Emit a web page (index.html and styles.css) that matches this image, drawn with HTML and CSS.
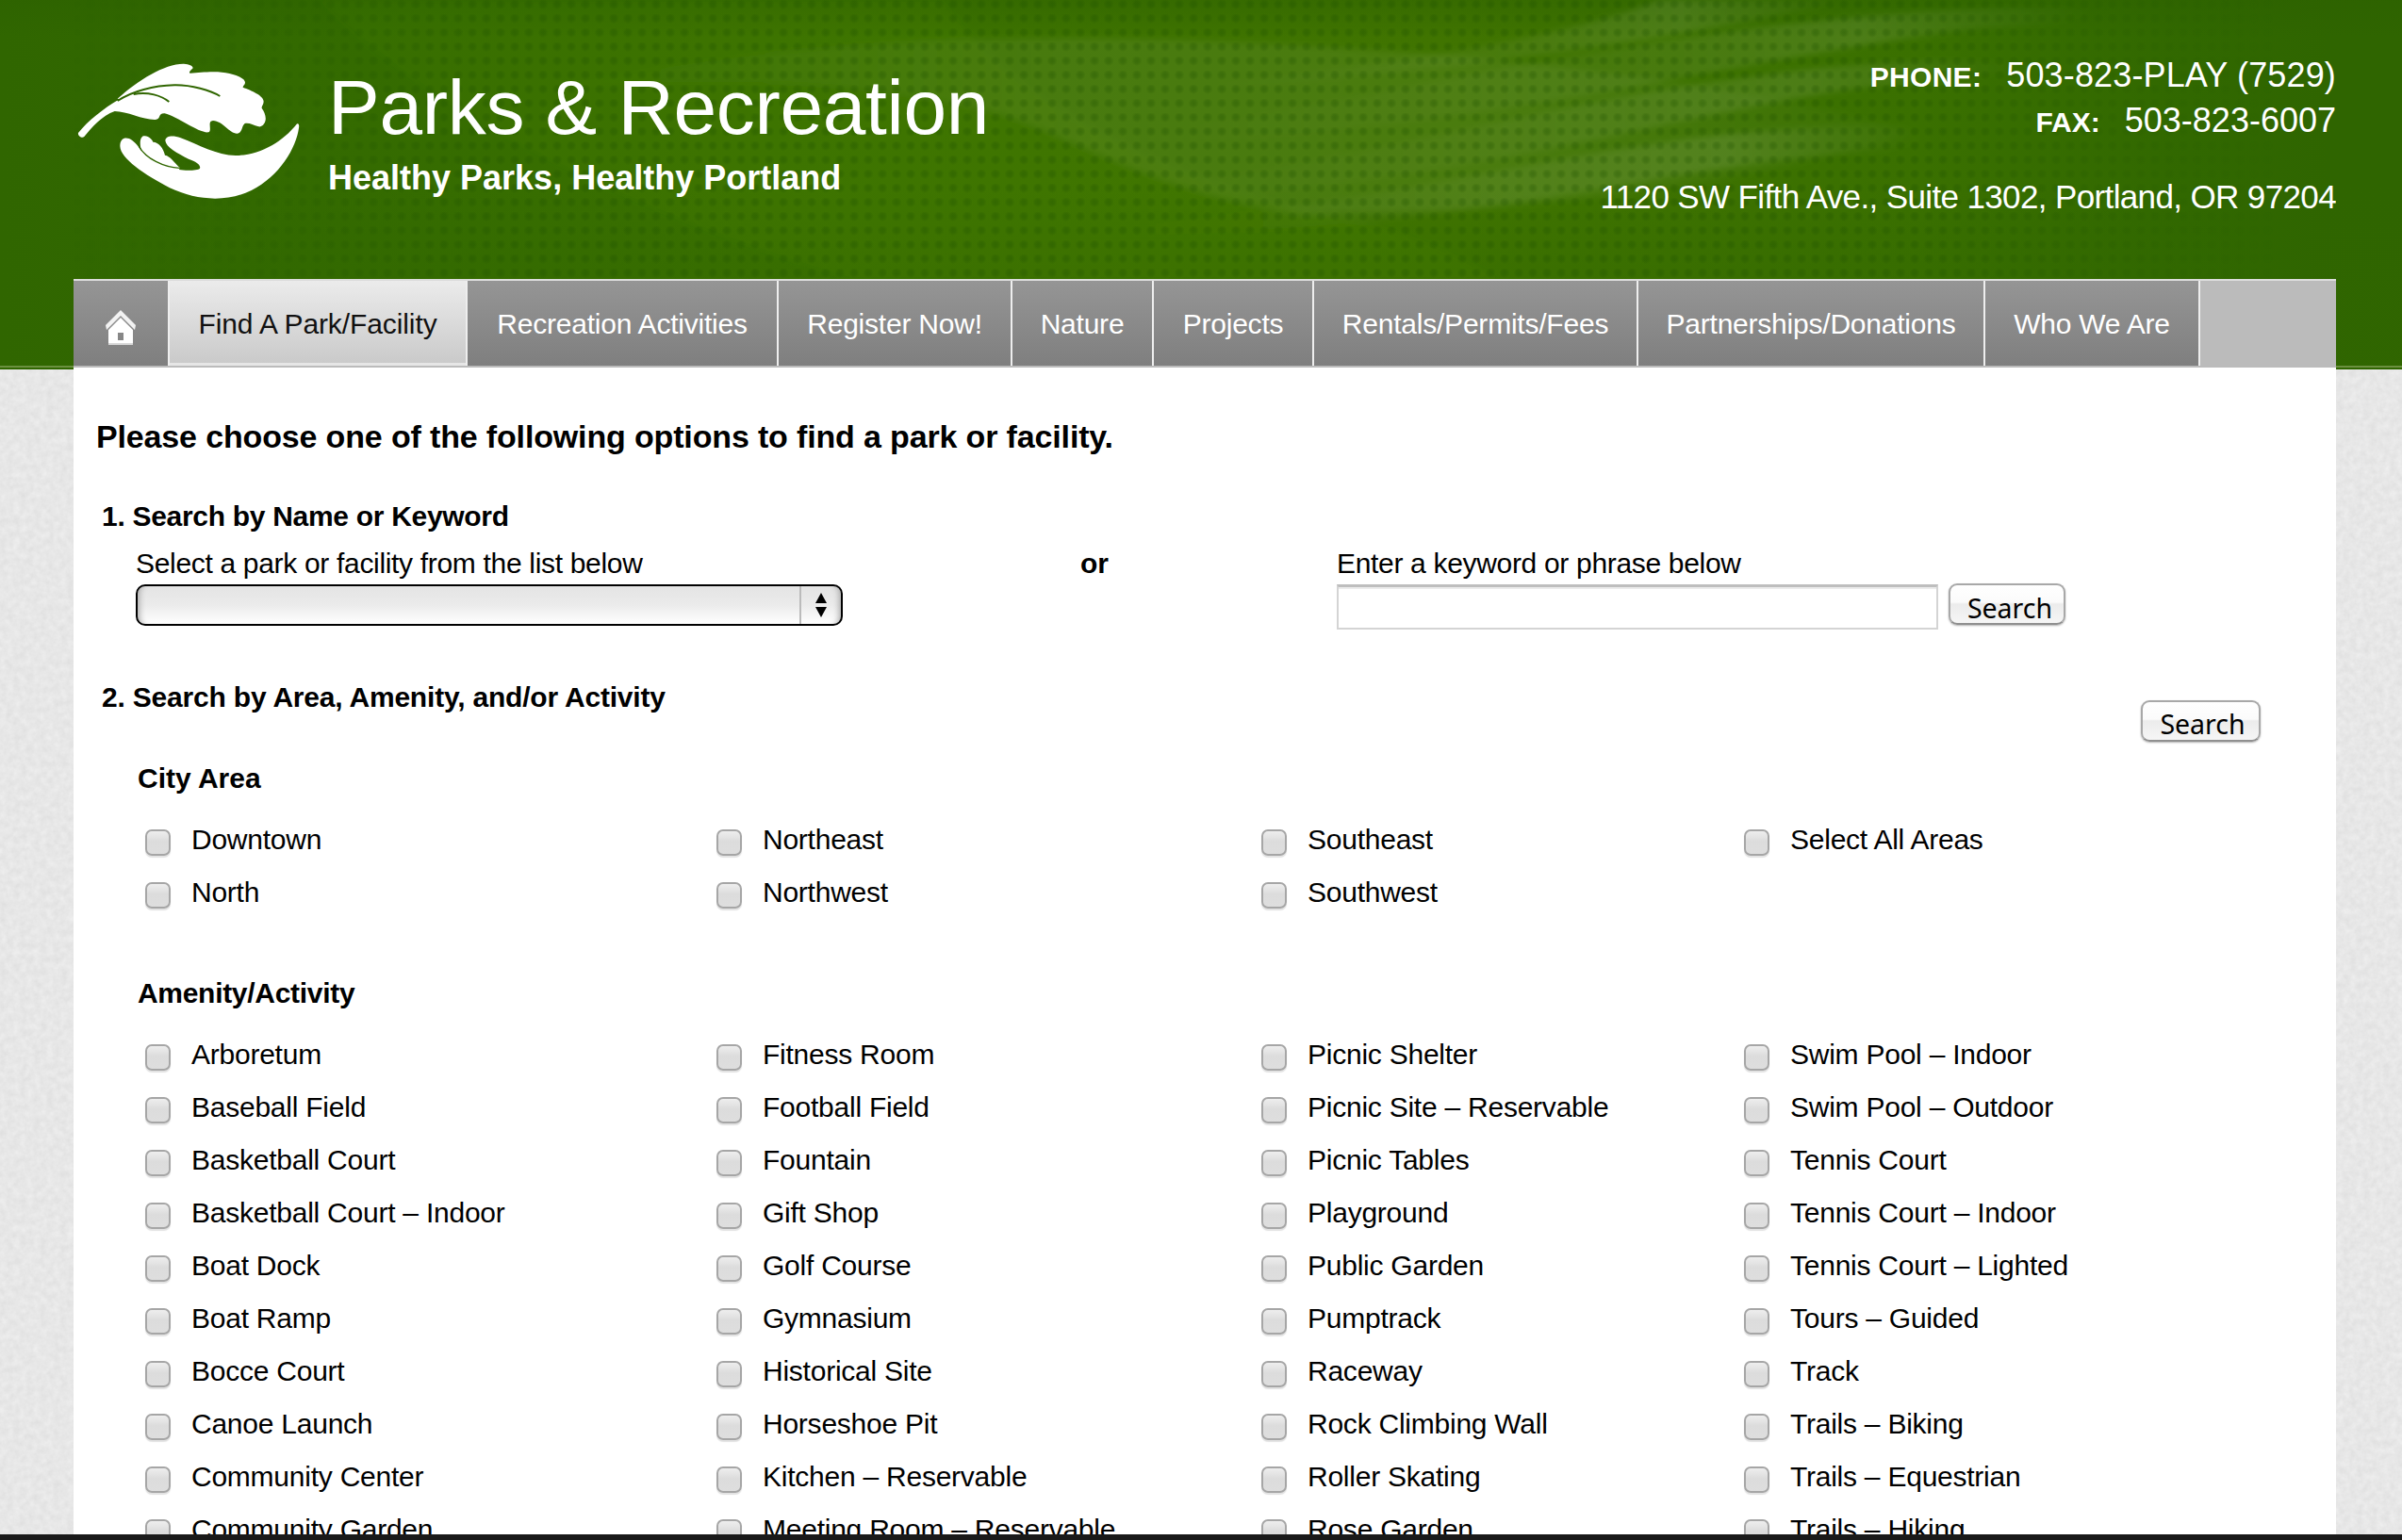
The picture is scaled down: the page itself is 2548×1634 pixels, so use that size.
FILE: index.html
```html
<!DOCTYPE html>
<html lang="en">
<head>
<meta charset="utf-8">
<title>Parks &amp; Recreation - Find A Park/Facility</title>
<link rel="stylesheet" href="styles.css">
</head>
<body>
<svg class="paper" aria-hidden="true">
  <filter id="grain" x="0" y="0" width="100%" height="100%" color-interpolation-filters="sRGB">
    <feTurbulence type="fractalNoise" baseFrequency="0.14" numOctaves="3" seed="4"/>
    <feColorMatrix type="matrix" values="0.07 0 0 0 0.87  0.07 0 0 0 0.87  0.07 0 0 0 0.87  0 0 0 0 1"/>
  </filter>
  <rect width="100%" height="100%" filter="url(#grain)"/>
</svg>
<div class="band">
  <svg class="band-art" viewBox="0 0 2548 392" preserveAspectRatio="none" aria-hidden="true">
    <defs>
      <linearGradient id="glow" x1="0" x2="1" y1="0" y2="0">
        <stop offset="0" stop-color="#306600"/><stop offset=".1" stop-color="#326900"/><stop offset=".32" stop-color="#3b7100"/><stop offset=".6" stop-color="#407400"/><stop offset=".8" stop-color="#3a7000"/><stop offset=".91" stop-color="#316800"/><stop offset=".97" stop-color="#2f6500"/>
      </linearGradient>
      <linearGradient id="shade" x1="0" x2="0" y1="0" y2="1">
        <stop offset="0" stop-color="#2c6000" stop-opacity=".45"/><stop offset=".1" stop-color="#2c6000" stop-opacity="0"/><stop offset=".5" stop-color="#306600" stop-opacity="0"/><stop offset=".8" stop-color="#306600" stop-opacity=".4"/>
      </linearGradient>
      <linearGradient id="lens" x1="0" x2="1" y1="0" y2="0">
        <stop offset="0" stop-color="#fff" stop-opacity="0"/><stop offset=".4" stop-color="#fff" stop-opacity=".06"/><stop offset=".7" stop-color="#fff" stop-opacity=".055"/><stop offset="1" stop-color="#fff" stop-opacity=".01"/>
      </linearGradient>
      <linearGradient id="ray" x1="0" x2="1" y1="0" y2="0">
        <stop offset="0" stop-color="#fff" stop-opacity="0"/><stop offset=".35" stop-color="#fff" stop-opacity=".03"/><stop offset=".75" stop-color="#fff" stop-opacity=".09"/><stop offset="1" stop-color="#fff" stop-opacity="0"/>
      </linearGradient>
      <linearGradient id="sides" x1="0" x2="1" y1="0" y2="0">
        <stop offset=".03" stop-color="#000"/><stop offset=".2" stop-color="#fff"/><stop offset=".8" stop-color="#fff"/><stop offset=".95" stop-color="#000"/>
      </linearGradient>
      <radialGradient id="dot"><stop offset="0" stop-color="#1f5200" stop-opacity=".34"/><stop offset=".5" stop-color="#1f5200" stop-opacity=".24"/><stop offset="1" stop-color="#1f5200" stop-opacity="0"/></radialGradient>
      <pattern id="dots" width="15" height="15" patternUnits="userSpaceOnUse"><circle cx="6" cy="4.5" r="5.5" fill="url(#dot)"/></pattern>
      <mask id="fade"><rect width="2548" height="392" fill="url(#sides)"/></mask>
      <filter id="soft"><feGaussianBlur stdDeviation="3"/></filter>
    </defs>
    <rect width="2548" height="392" fill="url(#glow)"/>
    <rect width="2548" height="392" fill="url(#shade)"/>
    <g filter="url(#soft)">
      <path d="M340 0C420 90 620 210 900 296H1590C1530 262 1470 238 1400 225C1200 180 1060 90 1000 0Z" fill="#6a9a00" opacity=".07"/>
      <path d="M560 100C750 55 950 41 1137 41C1450 43 1800 75 2030 140C1880 190 1650 226 1381 227C1230 205 1150 150 1060 120C900 80 700 80 560 100Z" fill="url(#lens)"/>
      <path d="M1250 95C1450 85 1750 50 1960 0H1760C1650 45 1450 70 1250 95Z" fill="url(#ray)"/>
      <path d="M1250 135C1500 100 1800 10 2190 8C2250 14 2200 26 2100 30C1850 60 1600 135 1250 150Z" fill="url(#ray)"/>
      <path d="M1250 195C1550 150 1750 75 2060 64C2190 64 2160 80 2020 88C1800 110 1600 190 1250 210Z" fill="url(#ray)"/>
      <path d="M1200 240C1550 205 1700 142 1960 134C2070 132 2060 152 1990 160C1750 176 1600 240 1200 250Z" fill="url(#ray)"/>
    </g>
    <rect width="2548" height="392" fill="url(#dots)" mask="url(#fade)"/>
  </svg>
</div>

<div class="page">
  <header class="masthead">
    <svg class="logo" viewBox="0 0 900 600" aria-label="Parks logo">
      <g fill="#fff">
        <path d="M69 303C100 265 150 225 200 196L194 194C260 135 345 82 405 83C424 84 437 91 433 98C426 104 419 110 425 113C450 112 470 109 500 109C550 109 601 125 600 143C600 150 592 153 593 158C620 168 659 184 659 203C659 213 652 217 653 224C661 234 667 250 665 262C663 276 652 285 643 283C625 277 610 269 599 273C589 280 592 303 575 305C550 306 530 265 498 264C478 265 496 295 484 301C455 306 385 251 344 241C321 240 334 260 314 261C275 262 225 234 185 234C145 248 112 285 88 315C80 321 67 312 69 303Z"/>
        <path d="M202 345C202 315 225 315 240 326C258 340 262 350 271 361C263 340 265 316 277 313C292 310 305 325 307 332C325 332 340 352 345 374C362 377 373 396 392 414L390 420C410 424 450 423 456 416C460 405 445 395 420 386C385 368 347 348 346 327C348 311 372 310 395 319C450 340 510 375 570 375C650 374 720 330 764 275C770 271 773 276 771 287C763 350 710 440 620 486C540 525 445 518 360 478C280 435 203 385 202 345Z"/>
      </g>
      <g fill="none" stroke="#306600">
        <path d="M194 201C240 170 310 152 375 151C430 150 490 168 520 186" stroke-width="6"/>
        <path d="M245 180C290 170 335 185 358 204" stroke-width="6"/>
        <path d="M262 346C285 385 340 413 392 415" stroke-width="4"/>
      </g>
    </svg>
    <div class="brand">
      <h1>Parks &amp; Recreation</h1>
      <p>Healthy Parks, Healthy Portland</p>
    </div>
    <div class="contact">
      <p><b class="phone">PHONE:</b><span class="num">503-823-PLAY (7529)</span></p>
      <p><b>FAX:</b><span>503-823-6007</span></p>
      <p class="address">1120 SW Fifth Ave., Suite 1302, Portland, OR 97204</p>
    </div>
  </header>

  <nav class="tabs">
    <a class="tab home"><svg viewBox="0 0 34 38" width="34" height="38" aria-label="Home"><path d="M17 1L1 17L2 22L17 7L32 22L33 17Z" fill="#f2f2f2"/><path d="M17 9L4 22V36H30V22ZM14 25H20V33H14Z" fill="#fff" fill-rule="evenodd"/><path d="M4 37H30" stroke="#d8d8d8" stroke-width="2"/></svg></a>
    <a class="tab active">Find A Park/Facility</a>
    <a class="tab">Recreation Activities</a>
    <a class="tab">Register Now!</a>
    <a class="tab">Nature</a>
    <a class="tab">Projects</a>
    <a class="tab">Rentals/Permits/Fees</a>
    <a class="tab">Partnerships/Donations</a>
    <a class="tab">Who We Are</a>
  </nav>

  <main class="content">
    <h2>Please choose one of the following options to find a park or facility.</h2>
    <h3 class="step">1. Search by Name or Keyword</h3>
    <div class="by-name">
      <div class="field">
        <label>Select a park or facility from the list below</label>
        <div class="select"><span class="arrows"><svg width="14" height="26" viewBox="0 0 14 26"><path d="M7 0L13 11H1ZM7 26L13 15H1Z" fill="#000"/></svg></span></div>
      </div>
      <b class="or">or</b>
      <div class="field">
        <label>Enter a keyword or phrase below</label>
        <div class="keyword"><input class="text" type="text"><button class="btn">Search</button></div>
      </div>
    </div>
    <div class="by-area">
      <h3>2. Search by Area, Amenity, and/or Activity</h3>
      <button class="btn wide">Search</button>
    </div>
    <h4>City Area</h4>
    <div class="options two">
      <label><input type="checkbox">Downtown</label>
      <label><input type="checkbox">North</label>
      <label><input type="checkbox">Northeast</label>
      <label><input type="checkbox">Northwest</label>
      <label><input type="checkbox">Southeast</label>
      <label><input type="checkbox">Southwest</label>
      <label><input type="checkbox">Select All Areas</label>
    </div>
    <h4 class="amenity">Amenity/Activity</h4>
    <div class="options ten">
      <label><input type="checkbox">Arboretum</label>
      <label><input type="checkbox">Baseball Field</label>
      <label><input type="checkbox">Basketball Court</label>
      <label><input type="checkbox">Basketball Court – Indoor</label>
      <label><input type="checkbox">Boat Dock</label>
      <label><input type="checkbox">Boat Ramp</label>
      <label><input type="checkbox">Bocce Court</label>
      <label><input type="checkbox">Canoe Launch</label>
      <label><input type="checkbox">Community Center</label>
      <label><input type="checkbox">Community Garden</label>
      <label><input type="checkbox">Fitness Room</label>
      <label><input type="checkbox">Football Field</label>
      <label><input type="checkbox">Fountain</label>
      <label><input type="checkbox">Gift Shop</label>
      <label><input type="checkbox">Golf Course</label>
      <label><input type="checkbox">Gymnasium</label>
      <label><input type="checkbox">Historical Site</label>
      <label><input type="checkbox">Horseshoe Pit</label>
      <label><input type="checkbox">Kitchen – Reservable</label>
      <label><input type="checkbox">Meeting Room – Reservable</label>
      <label><input type="checkbox">Picnic Shelter</label>
      <label><input type="checkbox">Picnic Site – Reservable</label>
      <label><input type="checkbox">Picnic Tables</label>
      <label><input type="checkbox">Playground</label>
      <label><input type="checkbox">Public Garden</label>
      <label><input type="checkbox">Pumptrack</label>
      <label><input type="checkbox">Raceway</label>
      <label><input type="checkbox">Rock Climbing Wall</label>
      <label><input type="checkbox">Roller Skating</label>
      <label><input type="checkbox">Rose Garden</label>
      <label><input type="checkbox">Swim Pool – Indoor</label>
      <label><input type="checkbox">Swim Pool – Outdoor</label>
      <label><input type="checkbox">Tennis Court</label>
      <label><input type="checkbox">Tennis Court – Indoor</label>
      <label><input type="checkbox">Tennis Court – Lighted</label>
      <label><input type="checkbox">Tours – Guided</label>
      <label><input type="checkbox">Track</label>
      <label><input type="checkbox">Trails – Biking</label>
      <label><input type="checkbox">Trails – Equestrian</label>
      <label><input type="checkbox">Trails – Hiking</label>
    </div>
  </main>
</div>
<div class="edge"></div>
</body>
</html>
```
FILE: styles.css
```css
* { box-sizing: border-box; }
html, body { margin: 0; height: 1634px; overflow: hidden; }
body {
  position: relative;
  display: flex;
  flex-direction: column;
  background: #e6e6e6;
  color: #000;
  font: 30px/36px "Liberation Sans", Arial, sans-serif;
}
h1, h2, h3, h4, p { margin: 0; font-weight: bold; }

/* Backdrop layers behind the page column */
.paper { position: absolute; left: 0; top: 0; width: 100%; height: 100%; }
.band { position: absolute; left: 0; top: 0; width: 100%; height: 392px; background: #306600; }
.band-art { display: block; width: 100%; height: 392px; }
.band::after { content: ""; position: absolute; left: 0; right: 0; bottom: 2px; height: 2px; background: #6b9040; }

.page { position: relative; flex: 1; min-height: 0; width: 2400px; margin-left: 78px; overflow: hidden; display: flex; flex-direction: column; }
.edge { position: relative; flex: none; height: 6px; background: #1a1a1a; }

.masthead { flex: none; display: flex; height: 296px; color: #fff; }
.logo { width: 300px; height: 200px; margin: 40px 0 0 -18px; }
.brand { margin-left: -12px; padding-top: 66px; }
.brand h1 { font-size: 82px; line-height: 96px; font-weight: normal; white-space: nowrap; letter-spacing: -.3px; }
.brand p { font-size: 36px; line-height: 44px; margin-top: 5px; white-space: nowrap; }
.contact { margin-left: auto; padding-top: 57px; text-align: right; }
.contact p { font-size: 36px; line-height: 46px; font-weight: normal; white-space: nowrap; }
.contact b { font-size: 30px; margin-right: 26px; }
.contact .num { letter-spacing: .15px; }
.contact .phone { letter-spacing: .3px; }
.contact .address { margin-top: 33px; font-size: 35px; letter-spacing: -.63px; }

.tabs {
  flex: none;
  display: grid;
  grid-template-columns: 102px 316px 330px 248px 150px 170px 344px 368px 228px;
  height: 94px;
  background: #bbb;
  border-top: 2px solid #dcdcdc;
  border-bottom: 2px solid #bbb;
}
.tab {
  display: flex;
  align-items: center;
  justify-content: center;
  padding-top: 2px;
  color: #fff;
  white-space: nowrap;
  letter-spacing: -.22px;
  border-right: 2px solid #eee;
  background: linear-gradient(#959595, #7f7f7f);
}
.tab.active { color: #111; background: linear-gradient(#ebebeb, #c9c9c9); box-shadow: inset 0 -3px #e6e6e6; letter-spacing: -.1px; }
.home svg { margin-top: 5px; }

.content { flex: 1; min-height: 0; padding: 53px 0 0 24px; background: #fff; overflow: hidden; }
.content h2 { font-size: 34px; line-height: 40px; letter-spacing: -.15px; white-space: nowrap; }
.content h3, .content h4 { font-size: 30px; line-height: 36px; white-space: nowrap; }
.content h3 { letter-spacing: -.2px; }
.content h3.step { margin: 47px 0 0 6px; letter-spacing: -.3px; }
.by-name { display: flex; align-items: flex-start; padding-left: 42px; margin-top: 14px; }
.field label { display: block; height: 40px; white-space: nowrap; letter-spacing: -.32px; }
.select {
  display: flex;
  justify-content: flex-end;
  width: 750px;
  height: 44px;
  border: 2px solid #000;
  border-radius: 10px;
  background: linear-gradient(#e4e4e4, #ebebeb 50%, #fff);
  box-shadow: inset 8px 0 6px -6px #aaa, inset -8px 0 6px -6px #aaa;
}
.arrows { display: flex; align-items: center; justify-content: center; width: 44px; border-left: 2px solid #bbb; }
.or { width: 272px; margin-left: 252px; }
.keyword { display: flex; align-items: flex-start; }
.text { width: 638px; height: 48px; padding: 0 6px; border: 2px solid #d4d4d4; border-top: 3px solid #bebebe; background: #fff; box-shadow: inset 0 2px #ececec; }
.btn {
  width: 124px;
  height: 44px;
  margin: -1px 0 0 11px;
  padding: 8px 0 0 6px;
  border: 2px solid #a8a8a8;
  border-bottom-color: #909090;
  border-radius: 9px;
  background: linear-gradient(#fff, #fbfbfb 45%, #ececec 50%, #f6f6f6);
  box-shadow: 0 1px 2px rgba(0, 0, 0, .3);
  color: #000;
  font: 28.5px/30px "Noto Sans", "Open Sans", sans-serif;
}
.by-area { display: flex; padding-left: 6px; margin-top: 54px; }
.btn.wide { width: 127px; margin: 21px 80px 0 auto; padding: 5px 0 0 4px; }
.content h4 { margin: 21px 0 0 44px; }
.content h4.amenity { margin-top: 62px; letter-spacing: -.3px; }

.options {
  display: grid;
  grid-auto-flow: column;
  grid-template-columns: 606px 578px 512px auto;
  margin: 18px 0 0 52px;
}
.two { grid-template-rows: repeat(2, 56px); }
.ten { grid-template-rows: repeat(10, 56px); }
.options label { display: flex; line-height: 58px; white-space: nowrap; letter-spacing: -.24px; }
.options input {
  appearance: none;
  flex: none;
  width: 27px;
  height: 28px;
  margin: 18px 22px 0 0;
  border: 2px solid #a6a6a6;
  border-radius: 7px;
  background: linear-gradient(#eee, #dcdcdc 45%, #dedede);
  box-shadow: 0 2px 1px #e2e2e2;
}
```
